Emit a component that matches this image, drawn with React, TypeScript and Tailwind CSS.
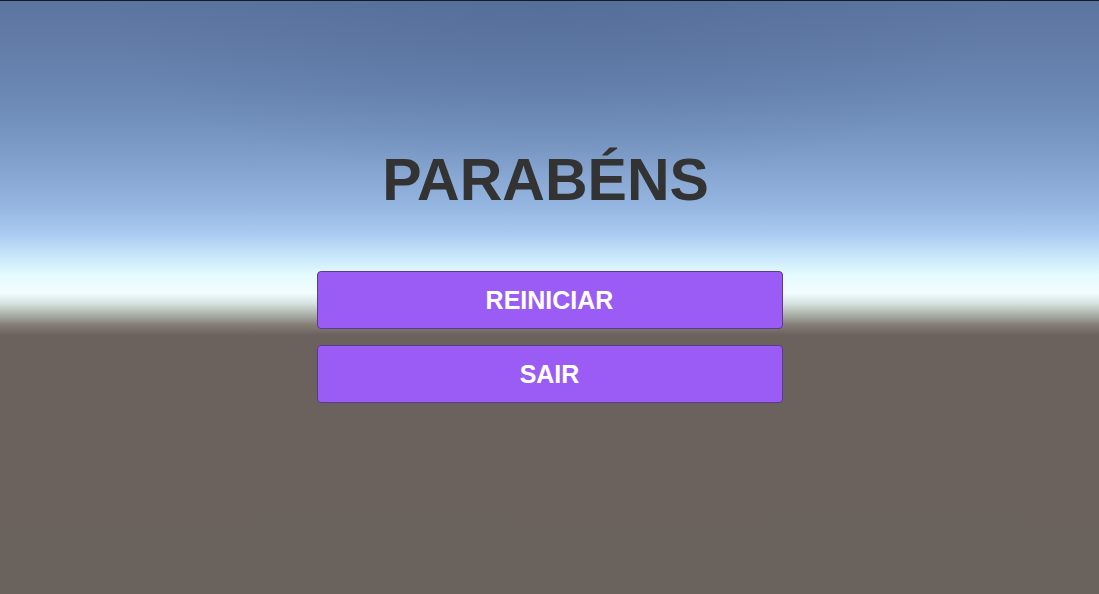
export default function App() {
  const buttons = ["REINICIAR", "SAIR"];

  return (
    <div
      className="relative w-[1099px] h-[594px] overflow-hidden border-t border-[#0f1e29] bg-[linear-gradient(to_bottom,#5c75a0_0px,#6a86b2_90px,#7d9cc8_150px,#95b6e0_205px,#a6c8f0_230px,#c8e6fb_255px,#e4fbff_274px,#f2fdff_292px,#d8e4e0_302px,#a9afa8_314px,#857d75_324px,#6b625e_334px,#6a625c_594px)]"
      style={{ fontFamily: '"Liberation Sans", Arial, sans-serif' }}
    >
      {/* darker sky at the top centre */}
      <div className="pointer-events-none absolute inset-x-0 top-0 h-[260px] bg-[radial-gradient(ellipse_60%_100%_at_50%_0%,rgba(70,95,140,0.35),rgba(70,95,140,0)_70%)]" />

      <div className="relative flex flex-col items-center pt-[150px]">
        <h1 className="text-[59px] leading-none font-bold text-[#333333] mr-[8px]">
          PARABÉNS
        </h1>

        <div className="mt-[61px] flex flex-col gap-[16px]">
          {buttons.map((label) => (
            <button
              key={label}
              className="w-[466px] h-[58px] rounded-[4px] border border-[#5b3c8c] bg-[#9a5cf4] pt-[1px] text-[25px] font-bold text-white"
            >
              {label}
            </button>
          ))}
        </div>
      </div>
    </div>
  );
}
